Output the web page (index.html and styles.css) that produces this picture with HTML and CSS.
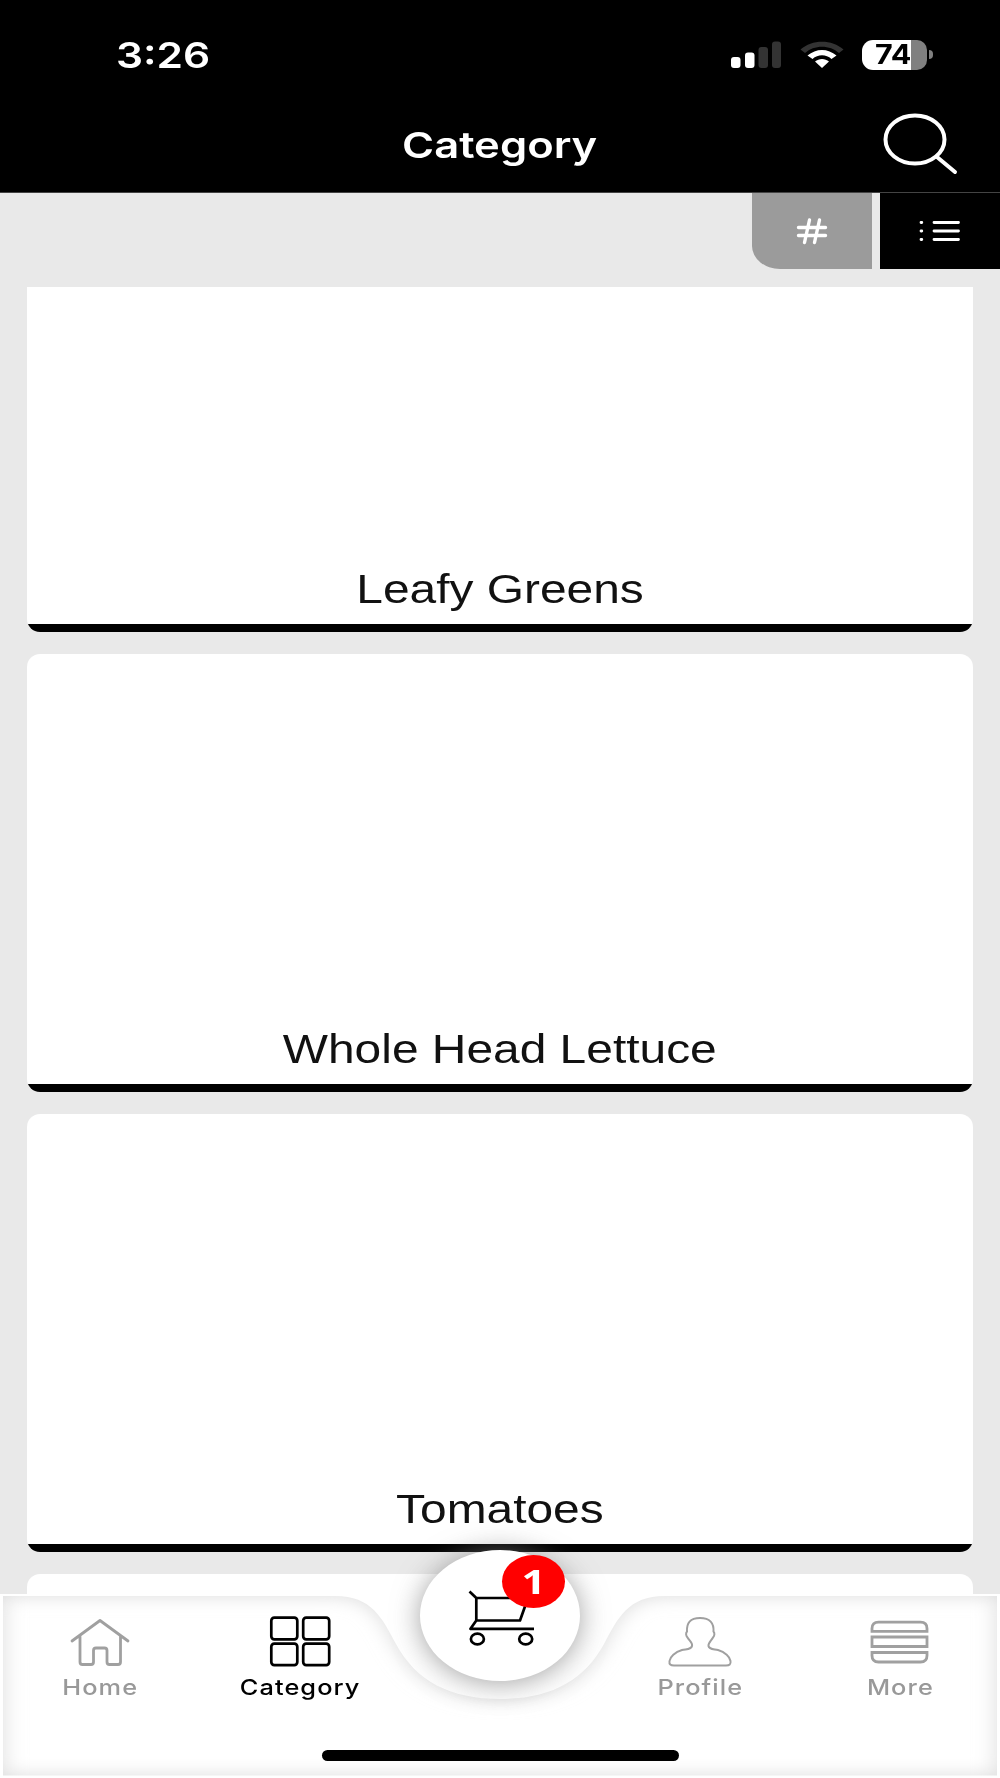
FILE: index.html
```html
<!DOCTYPE html>
<html lang="en">
<head>
  <meta charset="UTF-8">
  <meta name="viewport" content="width=device-width, initial-scale=1.0">
  <title>Category</title>
  <link rel="stylesheet" href="styles.css">
</head>
<body>
  <div class="screen">
    <header class="header">
      <div class="status">
        <span class="time">3:26</span>
        <div class="status-icons">
          <svg class="signal" width="50" height="28" viewBox="0 0 50 28">
            <rect x="0" y="16" width="9.5" height="11" rx="3" fill="#fff"/>
            <rect x="14" y="11.500" width="9.500" height="15.500" rx="3" fill="#fff"/>
            <rect x="27.500" y="6" width="9.500" height="21" rx="3" fill="#333"/>
            <rect x="41" y="0.500" width="9" height="26.500" rx="3" fill="#333"/>
          </svg>
          <svg class="wifi" width="44" height="28" viewBox="0 0 44 28">
            <path d="M0.500 8.500 C12 -2 32 -2 43.500 8.500 L39 12 C30 3.500 14 3.500 5 12 Z" fill="#333"/>
            <path d="M7.500 14.500 C16 7 28 7 36.500 14.500 L31.500 18 C26 13 18 13 12.500 18 Z" fill="#fff"/>
            <path d="M15 20.500 C19 17 25 17 29 20.500 L22 27 Z" fill="#fff"/>
          </svg>
          <div class="battery"><span>74</span></div>
          <div class="battery-tip"></div>
        </div>
      </div>
      <div class="title-bar">
        <h1>Category</h1>
        <svg class="search" width="76" height="64" viewBox="0 0 76 64" fill="none" stroke="#fff" stroke-width="4" stroke-linecap="round">
          <ellipse cx="33" cy="27.500" rx="29.500" ry="24"/>
          <path d="M55 45 L73 60"/>
        </svg>
      </div>
    </header>

    <div class="view-tabs">
      <button class="tab tab-number">
        <svg width="32" height="28" viewBox="0 0 32 28" fill="none" stroke="#fff" stroke-width="3.400" stroke-linecap="round">
          <path d="M2.500 10.500 H29.500 M2.500 18.500 H29.500 M13.500 3 L8.500 25.500 M23.500 3 L18.500 25.500"/>
        </svg>
      </button>
      <button class="tab tab-list">
        <svg width="42" height="24" viewBox="0 0 42 24" fill="none" stroke="#fff" stroke-width="2.800" stroke-linecap="round">
          <path d="M2 3.500 H2.800 M2 12 H2.800 M2 20.500 H2.800 M15 3.500 H39.500 M15 12 H39.500 M15 20.500 H39.500"/>
        </svg>
      </button>
    </div>

    <main class="list">
      <div class="card card-first"><span>Leafy Greens</span></div>
      <div class="card"><span>Whole Head Lettuce</span></div>
      <div class="card"><span>Tomatoes</span></div>
      <div class="card card-last"></div>
    </main>

    <nav class="nav">
      <svg class="nav-shape" width="1000" height="184" viewBox="0 0 1000 184">
        <defs>
          <clipPath id="barClip">
            <path d="M3 2 H335 C372 2 382 24 396 50 C416 87 450 105 500 105 C550 105 584 87 604 50 C618 24 628 2 665 2 H997 V181.500 H3 Z"/>
          </clipPath>
          <filter id="soft" filterUnits="userSpaceOnUse" x="-40" y="-40" width="1080" height="264">
            <feGaussianBlur stdDeviation="11 9"/>
          </filter>
        </defs>
        <g clip-path="url(#barClip)">
          <path d="M-20 -20 H1020 V204 H-20 Z M3 2 V181.500 H997 V2 H665 C628 2 618 24 604 50 C584 87 550 105 500 105 C450 105 416 87 396 50 C382 24 372 2 335 2 Z" fill="#dcdcdc" fill-rule="evenodd" filter="url(#soft)"/>
        </g>
      </svg>

      <a class="nav-item">
        <svg width="64" height="52" viewBox="0 0 64 52" fill="none" stroke="#a0a0a0" stroke-width="2.800" stroke-linecap="round" stroke-linejoin="round">
          <path d="M4 25 L32 4.500 L60 25 M12 20.500 V46 Q12 48.500 14.500 48.500 H23 Q25.500 48.500 25.500 46 V34.500 Q25.500 32 28 32 H36.500 Q39 32 39 34.500 V46 Q39 48.500 41.500 48.500 H50 Q52.500 48.500 52.500 46 V20.500"/>
        </svg>
        <span class="label-home">Home</span>
      </a>
      <a class="nav-item active">
        <svg width="64" height="52" viewBox="0 0 64 52" fill="none" stroke="#000" stroke-width="2.700">
          <rect x="3.300" y="1.700" width="26" height="21.600" rx="3"/>
          <rect x="35.200" y="1.700" width="26" height="21.600" rx="3"/>
          <rect x="3.300" y="27.700" width="26" height="21.400" rx="3"/>
          <rect x="35.200" y="27.700" width="26" height="21.400" rx="3"/>
        </svg>
        <span class="label-category">Category</span>
      </a>
      <a class="cart">
        <svg width="72" height="60" viewBox="0 0 72 60" fill="none" stroke="#000" stroke-width="2.700" stroke-linejoin="round">
          <path d="M5.500 4.500 L12.300 11 H64 L56 33.500 H12.300 V11 M12.300 33.500 L6.500 41.800 H70"/>
          <ellipse cx="13.400" cy="52" rx="6.500" ry="5.300"/>
          <ellipse cx="61.700" cy="52" rx="6.500" ry="5.300"/>
        </svg>
        <span class="badge"><b>1</b></span>
      </a>
      <a class="nav-item">
        <svg width="64" height="52" viewBox="0 0 64 52" fill="none" stroke="#a0a0a0" stroke-width="2" stroke-linejoin="round">
          <path d="M32 2 C22 2 18.500 7 19 15.500 C17.500 17 18 20 19.500 21.500 C21.500 25 25 27 24 30 C23.500 33.500 18 33 14 34 C7 36 2 41 1.500 45 C1 48.500 2.500 49.500 6 49.500 H58 C61.500 49.500 63 48.500 62.500 45 C62 41 57 36 50 34 C46 33 41 33.500 40.500 30 C40 27 43 25 45 21.500 C46.500 20 47 17 45.500 15.500 C46 7 42 2 32 2 Z"/>
        </svg>
        <span class="label-profile">Profile</span>
      </a>
      <a class="nav-item">
        <svg width="64" height="52" viewBox="0 0 64 52" fill="none" stroke="#a0a0a0" stroke-width="2.800">
          <path d="M4 15.300 V12.500 Q4 6.200 10.500 6.200 H52.500 Q59 6.200 59 12.500 V15.300 Z"/>
          <path d="M4 21 H59 V30.500 H4 Z"/>
          <path d="M4 36.500 V39.500 Q4 46 10.500 46 H52.500 Q59 46 59 39.500 V36.500 Z"/>
        </svg>
        <span class="label-more">More</span>
      </a>
      <div class="home-indicator"></div>
    </nav>
  </div>
</body>
</html>
```
FILE: styles.css
```css
* {
  box-sizing: border-box;
}
body {
  margin: 0;
  background-color: #e9e9e9;
  font-family: Inter, "Liberation Sans", sans-serif;
}
svg {
  display: block;
}
.screen {
  width: 1000px;
  height: 1778px;
  display: flex;
  flex-direction: column;
  overflow: hidden;
}

/* Header */
.header {
  flex: none;
  height: 193px;
  background: #000;
  border-bottom: 1px solid #444;
  color: #fff;
}
.status {
  height: 110px;
  padding: 0 67px 0 116px;
  display: flex;
  justify-content: space-between;
  align-items: center;
}
.time {
  font-size: 36px;
  font-weight: 600;
  transform: scaleX(1.18);
  transform-origin: left;
}
.status-icons {
  display: flex;
  align-items: center;
  margin-top: -1px;
}
.wifi {
  margin: 0 18px 0 19px;
}
.battery {
  width: 65px;
  height: 30px;
  border-radius: 11px 10px 10px 11px;
  background: linear-gradient(to right, #fff 49px, #808080 49px);
  color: #000;
  text-align: center;
  font-size: 27px;
  font-weight: 700;
  line-height: 29px;
}
.battery span {
  display: inline-block;
  transform: scaleX(1.13);
  margin-right: 2px;
}
.battery-tip {
  width: 4px;
  height: 9px;
  margin-left: 2px;
  border-radius: 0 4px 4px 0;
  background: #808080;
}
.title-bar {
  height: 82px;
  padding-right: 42px;
  display: grid;
  grid-template-columns: 1fr auto 1fr;
}
h1 {
  grid-column: 2;
  margin: 12px 0 0 42px;
  font-size: 36px;
  font-weight: 600;
  line-height: 46px;
  transform: scaleX(1.21);
}
.search {
  justify-self: end;
  margin-top: 2px;
}

/* View switch */
.view-tabs {
  flex: none;
  height: 94px;
  display: flex;
  justify-content: flex-end;
  align-items: flex-start;
  gap: 8px;
}
.tab {
  width: 120px;
  height: 76px;
  padding: 0;
  border: none;
  display: flex;
  justify-content: center;
  align-items: center;
}
.tab-number {
  background: #9b9b9b;
  border-bottom-left-radius: 28px 23px;
}
.tab-list {
  background: #000;
}

/* Category cards */
.list {
  flex: none;
  height: 1307px;
  padding: 0 27px;
  display: flex;
  flex-direction: column;
  gap: 22px;
  overflow: hidden;
}
.card {
  flex: none;
  height: 438px;
  background: linear-gradient(to top, #000 8px, #fff 8px);
  border-radius: 13px;
  display: flex;
  justify-content: center;
  align-items: flex-end;
  padding-bottom: 18px;
  color: #111;
  font-family: "Liberation Sans", Arial, sans-serif;
  font-size: 41px;
  line-height: 50px;
}
.card span {
  transform: scaleX(1.168);
}
.card-first {
  height: 345px;
  border-radius: 0 0 13px 13px;
}

/* Bottom navigation */
.nav {
  flex: none;
  position: relative;
  height: 184px;
  background: #fff;
  display: grid;
  grid-template-columns: repeat(5, 200px);
}
.nav-shape {
  position: absolute;
  left: 0;
  top: 0;
}
.nav-item {
  position: relative;
  padding-top: 22px;
  display: flex;
  flex-direction: column;
  align-items: center;
  color: #999;
}
.nav-item span {
  margin-top: 5px;
  font-size: 21.5px;
  font-weight: 500;
  line-height: 28px;
  letter-spacing: 0.9px;
  transform: scaleX(1.18);
}
.nav-item.active {
  color: #000;
}
.cart {
  position: relative;
  justify-self: center;
  width: 160px;
  height: 131px;
  margin-top: -44px;
  padding: 37px 0 0 44px;
  border-radius: 50%;
  background: #fff;
  box-shadow: 0 2px 28px rgba(130, 130, 130, 0.75);
}
.badge {
  position: absolute;
  left: 82px;
  top: 5px;
  width: 63px;
  height: 53px;
  border-radius: 50%;
  background: #f00;
  color: #fff;
  font-family: "Open Sans", sans-serif;
  font-size: 34px;
  line-height: 53px;
  text-align: center;
}
.badge b {
  display: inline-block;
  transform: scaleX(1.25);
}
.home-indicator {
  position: absolute;
  left: 322px;
  bottom: 17px;
  width: 357px;
  height: 11px;
  border-radius: 6px;
  background: #000;
}
```
